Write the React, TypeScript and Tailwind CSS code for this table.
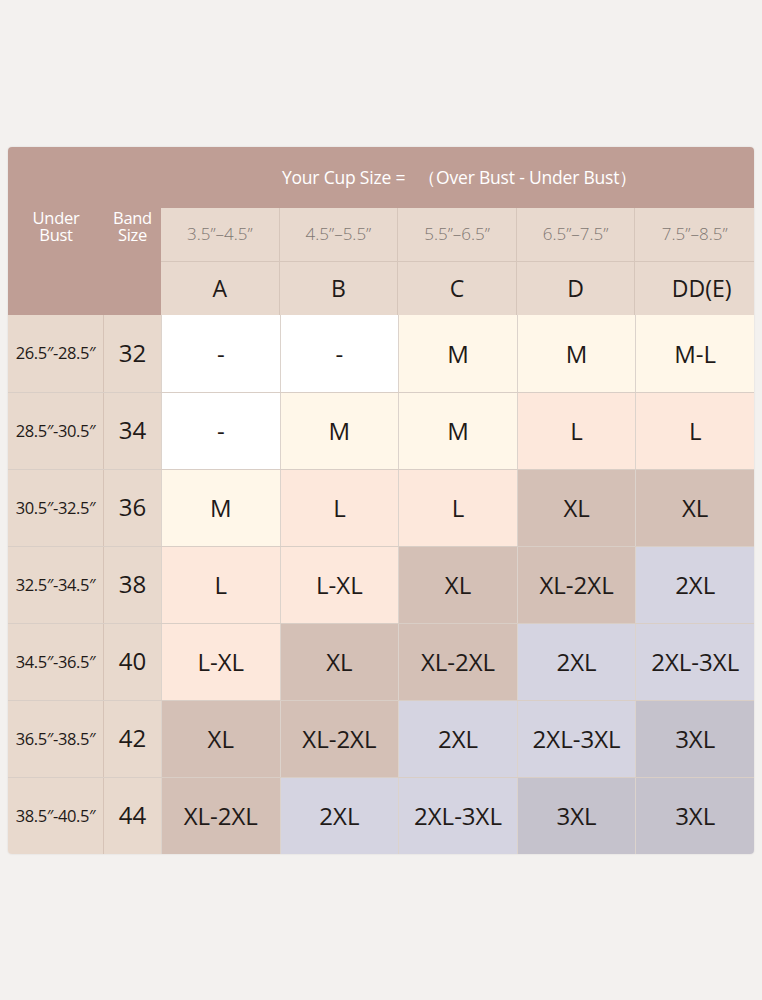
const cupRanges = ["3.5\u201D\u20134.5\u201D", "4.5\u201D\u20135.5\u201D", "5.5\u201D\u20136.5\u201D", "6.5\u201D\u20137.5\u201D", "7.5\u201D\u20138.5\u201D"];
const cups = ["A", "B", "C", "D", "DD(E)"];

type Tone = "white" | "cream" | "peach" | "taupe" | "lav" | "gray";

const toneClass: Record<Tone, string> = {
  white: "bg-white",
  cream: "bg-[#fff7e9]",
  peach: "bg-[#fde8dc]",
  taupe: "bg-[#d4c0b6]",
  lav: "bg-[#d5d4e1]",
  gray: "bg-[#c5c2cc]",
};

const rows: { under: string; band: string; cells: [string, Tone][] }[] = [
  { under: "26.5\u2033-28.5\u2033", band: "32", cells: [["-", "white"], ["-", "white"], ["M", "cream"], ["M", "cream"], ["M-L", "cream"]] },
  { under: "28.5\u2033-30.5\u2033", band: "34", cells: [["-", "white"], ["M", "cream"], ["M", "cream"], ["L", "peach"], ["L", "peach"]] },
  { under: "30.5\u2033-32.5\u2033", band: "36", cells: [["M", "cream"], ["L", "peach"], ["L", "peach"], ["XL", "taupe"], ["XL", "taupe"]] },
  { under: "32.5\u2033-34.5\u2033", band: "38", cells: [["L", "peach"], ["L-XL", "peach"], ["XL", "taupe"], ["XL-2XL", "taupe"], ["2XL", "lav"]] },
  { under: "34.5\u2033-36.5\u2033", band: "40", cells: [["L-XL", "peach"], ["XL", "taupe"], ["XL-2XL", "taupe"], ["2XL", "lav"], ["2XL-3XL", "lav"]] },
  { under: "36.5\u2033-38.5\u2033", band: "42", cells: [["XL", "taupe"], ["XL-2XL", "taupe"], ["2XL", "lav"], ["2XL-3XL", "lav"], ["3XL", "gray"]] },
  { under: "38.5\u2033-40.5\u2033", band: "44", cells: [["XL-2XL", "taupe"], ["2XL", "lav"], ["2XL-3XL", "lav"], ["3XL", "gray"], ["3XL", "gray"]] },
];

export default function App() {
  return (
    <div className="min-h-[1000px] bg-[#f3f1ef] px-2 pt-[147px] font-['Open_Sans','Noto_Sans',sans-serif] text-[#1f1a18]">
      <div className="overflow-hidden rounded-[4px] shadow-[0_0_2px_rgba(0,0,0,0.12)]">
        {/* header */}
        <div className="grid grid-cols-[96px_57px_repeat(5,1fr)] grid-rows-[61px_54px_53px] bg-[#bf9e95]">
          <div className="row-span-3 flex items-center justify-center pb-[10px] text-center text-[16.5px] leading-[17px] tracking-[-0.3px] text-white">
            <p>
              Under
              <br />
              Bust
            </p>
          </div>
          <div className="row-span-3 flex items-center justify-center pb-[10px] text-center text-[16.5px] leading-[17px] tracking-[-0.3px] text-white">
            <p>
              Band
              <br />
              Size
            </p>
          </div>
          <div className="col-span-5 flex items-center justify-center pl-[4px] text-[17.5px] tracking-[-0.2px] text-white">
            Your Cup Size =&nbsp;&nbsp;&nbsp;（Over Bust - Under Bust）
          </div>
          {cupRanges.map((r, i) => (
            <div
              key={r}
              className={`flex items-center justify-center border-b border-[#d6c6bb] bg-[#e8d9ce] pb-[2px] text-[17px] font-light text-[#7f7772] ${i < 4 ? "border-r" : ""}`}
            >
              {r}
            </div>
          ))}
          {cups.map((c, i) => (
            <div
              key={c}
              className={`flex items-center justify-center border-[#d6c6bb] bg-[#e8d9ce] text-[23px] ${i < 4 ? "border-r" : ""} ${i === 4 ? "pl-[14px]" : ""}`}
            >
              {c}
            </div>
          ))}
        </div>

        {/* body */}
        {rows.map((row, ri) => (
          <div
            key={row.band}
            className={`grid h-[77px] grid-cols-[96px_57px_repeat(5,1fr)] ${ri > 0 ? "border-t border-[#d9cec6]" : ""}`}
          >
            <div className="flex items-center justify-center border-r border-[#d6c3b7] bg-[#e8d9cd] text-[16.5px] tracking-[-0.4px]">
              {row.under}
            </div>
            <div className="flex items-center justify-center bg-[#e8d9cd] pb-[2px] text-[24px]">{row.band}</div>
            {row.cells.map(([label, tone], ci) => (
              <div
                key={ci}
                className={`flex items-center justify-center border-l border-[#dcd3cc] text-[24px] ${toneClass[tone]}`}
              >
                {label}
              </div>
            ))}
          </div>
        ))}
      </div>
    </div>
  );
}
